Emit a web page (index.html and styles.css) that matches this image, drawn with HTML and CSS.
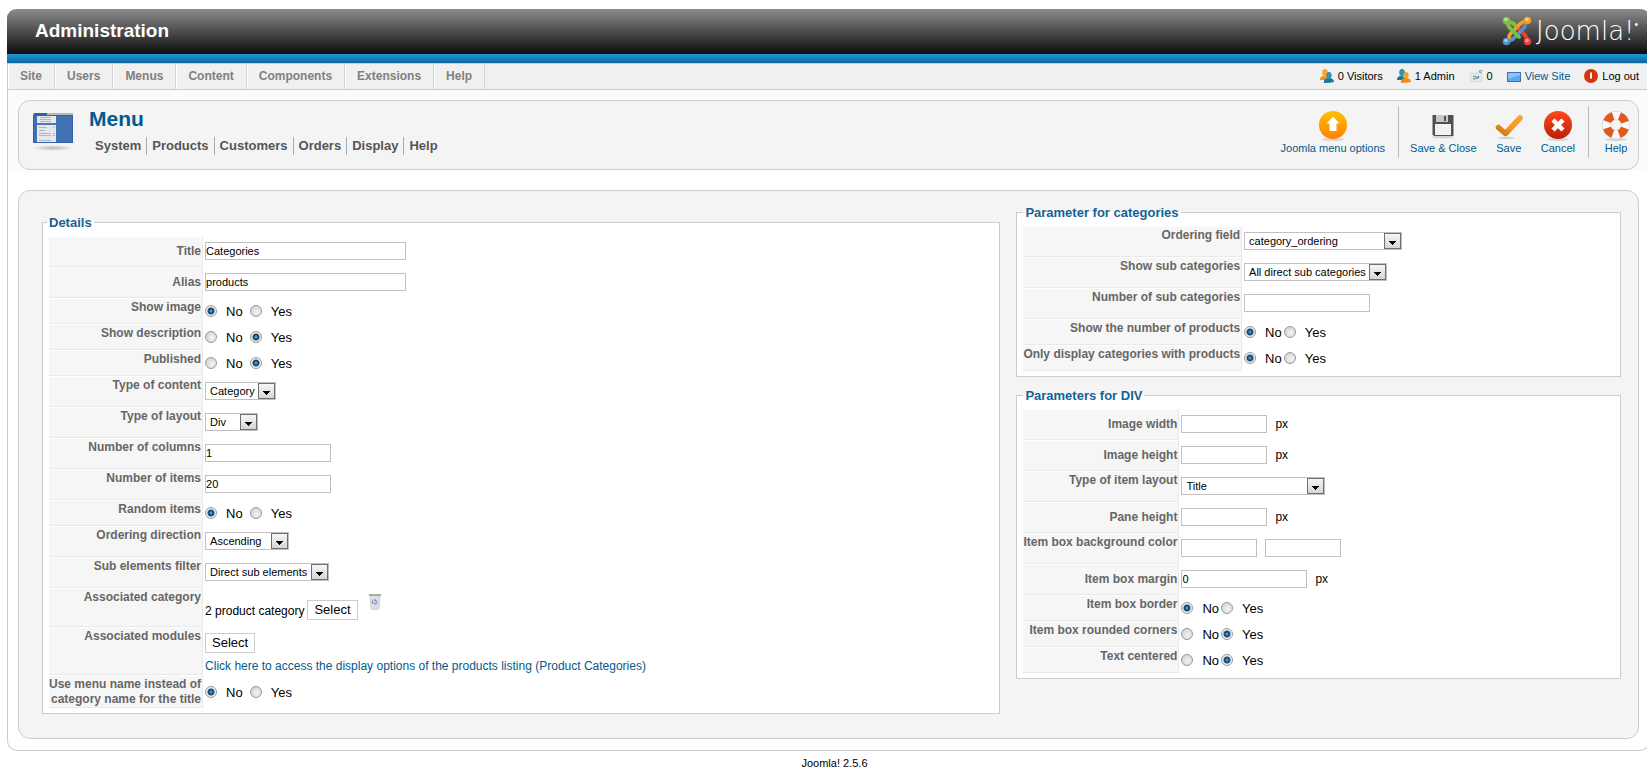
FILE: index.html
```
<!DOCTYPE html>
<html lang="en">
  <head>
    <meta charset="UTF-8" />
    <meta name="viewport" content="width=device-width, initial-scale=1.0" />
    <title>Administration - Menu</title>
    <link rel="stylesheet" href="styles.css">
  </head>
  <body>
    <header class="header">
      <h1>Administration</h1>
      <div class="logo">
        <svg width="30" height="30" viewBox="0 0 30 30" fill="none" stroke-width="3.8" stroke-linecap="round" stroke-linejoin="round">
          <path d="M4.500 25.500L8 24.500Q11 23.500 13 21L21 13" stroke="#5091cd" />
          <path d="M25.500 25.500L24.500 22Q23.500 19 21 17L13 9Q11 7 8 8" stroke="#ee4035" />
          <path d="M25.500 4.500L22 5.500Q19 6.500 17 9L9 17Q7 19 7 22" stroke="#f89a1c" />
          <path d="M4.500 4.500L5.500 8Q6.500 11 9 13L17 21" stroke="#7ac143" />
          <path d="M17 17L21 13Q23 11 23 9" stroke="#5091cd" />
          <path d="M6 7Q10 5 13 9" stroke="#7ac143" />
          <circle cx="4.500" cy="4.500" r="3.800" fill="#7ac143" />
          <circle cx="25.500" cy="4.500" r="3.800" fill="#f89a1c" />
          <circle cx="4.500" cy="25.500" r="3.800" fill="#5091cd" />
          <circle cx="25.500" cy="25.500" r="3.800" fill="#ee4035" />
          <g fill="#fff" fill-opacity="0.5">
            <circle cx="4" cy="3.500" r="1.800" />
            <circle cx="25" cy="3.500" r="1.800" />
            <circle cx="4" cy="24.500" r="1.800" />
            <circle cx="25" cy="24.500" r="1.800" />
          </g>
        </svg>
        <span>Joomla!<sup>&bull;</sup></span>
      </div>
    </header>

    <div class="menubar">
      <nav class="menu">
        <a href="#">Site</a>
        <a href="#">Users</a>
        <a href="#">Menus</a>
        <a href="#">Content</a>
        <a href="#">Components</a>
        <a href="#">Extensions</a>
        <a href="#">Help</a>
      </nav>
      <div class="status">
        <span>
          <svg width="14" height="14" viewBox="0 0 14 14">
            <path d="M0 11Q0 7 4 7Q8 7 9 11Z" fill="#e8951c" />
            <ellipse cx="5" cy="3.500" rx="2.800" ry="3.500" fill="#f5a623" />
            <path d="M4 14Q3 10 8 9Q14 9 14 13Q10 14 4 14Z" fill="#1b7694" />
            <ellipse cx="9" cy="6.500" rx="2.600" ry="3.400" fill="#2c93b4" />
          </svg>
          0 Visitors
        </span>
        <span>
          <svg width="14" height="14" viewBox="0 0 14 14">
            <path d="M0 11Q0 7 4 7Q8 7 9 11Z" fill="#1b7694" />
            <ellipse cx="5" cy="3.500" rx="2.800" ry="3.500" fill="#2c93b4" />
            <path d="M4 14Q3 10 8 9Q14 9 14 13Q10 14 4 14Z" fill="#f08a1c" />
            <ellipse cx="9" cy="6.500" rx="2.600" ry="3.400" fill="#f5a623" />
          </svg>
          1 Admin
        </span>
        <span>
          <svg width="14" height="14" viewBox="0 0 14 14">
            <path d="M1 5L12 3L13 12L2 13Z" fill="#e9e9e9" stroke="#dadada" />
            <path d="M4 8Q6 6 7 8Q9 11 10 8M4 10Q6 11 10 7" fill="none" stroke="#3d8196" />
            <path d="M9 0L14 0L13 5L9 4Z" fill="#e9eef4" />
            <circle cx="11.500" cy="2.500" r="1.200" fill="none" stroke="#5a8fc8" />
          </svg>
          0
        </span>
        <a href="#">
          <svg width="14" height="14" viewBox="0 0 14 14">
            <rect x="0.500" y="3.500" width="13" height="9" fill="#5ba6f5" stroke="#3f6fae" />
            <path d="M1 4H13V6L1 10Z" fill="#8cc2fa" />
          </svg>
          View Site
        </a>
        <a href="#" class="logout">
          <svg width="14" height="14" viewBox="0 0 14 14">
            <circle cx="7" cy="7" r="7" fill="#d9340f" />
            <path d="M7 3.500V9.500" stroke="#fff" stroke-width="2" />
          </svg>
          Log out
        </a>
      </div>
    </div>

    <main class="content">
      <div class="toolbar-wrap">
        <section class="toolbar">
          <svg class="page-icon" width="40" height="38" viewBox="0 0 40 38">
            <defs>
              <radialGradient id="shadow">
                <stop offset="0" stop-color="#b8b8b8" />
                <stop offset="1" stop-color="#f4f4f4" />
              </radialGradient>
            </defs>
            <ellipse cx="20" cy="35" rx="20" ry="3" fill="url(#shadow)" />
            <rect width="40" height="30" fill="#2f61a6" />
            <rect x="1" y="3" width="38" height="26" fill="#3f71b3" />
            <path d="M0 0H40V2H0Z" fill="#b5bcb5" />
            <path d="M1 0H14V2H1Z" fill="#2f61a6" />
            <path d="M4 3H23V29H4Z" fill="#e6e8ec" />
            <path d="M4 10H23V12H4Z" fill="#4d78b5" />
            <path d="M7 4.500H18M7 6.500H18M7 8.500H18M6 14.500H14M6 17.500H12M6 20.500H18M6 22.500H18M6 27.500H18M20 14.500H22M20 20.500H22M20 22.500H22" stroke="#b4b6bd" />
          </svg>
          <div class="page-title">
            <h2>Menu</h2>
            <nav class="submenu">
              <a href="#">System</a>
              <a href="#">Products</a>
              <a href="#">Customers</a>
              <a href="#">Orders</a>
              <a href="#">Display</a>
              <a href="#">Help</a>
            </nav>
          </div>
          <div class="buttons">
            <button type="button" class="tool">
              <svg width="32" height="32" viewBox="0 0 32 32">
                <defs>
                  <linearGradient id="orange" x1="0" y1="0" x2="0" y2="1">
                    <stop offset="0" stop-color="#ffc000" />
                    <stop offset="1" stop-color="#ff8200" />
                  </linearGradient>
                  <linearGradient id="red" x1="0" y1="0" x2="0" y2="1">
                    <stop offset="0" stop-color="#ff4a1c" />
                    <stop offset="1" stop-color="#b81f0a" />
                  </linearGradient>
                  <linearGradient id="tick" x1="0" y1="1" x2="1" y2="0">
                    <stop offset="0" stop-color="#c9730f" />
                    <stop offset="0.500" stop-color="#f79a23" />
                    <stop offset="1" stop-color="#f7a13a" />
                  </linearGradient>
                </defs>
                <ellipse cx="16" cy="29.500" rx="11" ry="1.500" fill="#d4d4d4" />
                <circle cx="16" cy="15" r="14" fill="url(#orange)" />
                <path d="M16 6.500L22.500 13.500H19.500V21H12.500V13.500H9.500Z" fill="#fff" />
              </svg>
              Joomla menu options
            </button>
            <span class="divider"></span>
            <button type="button" class="tool">
              <svg width="32" height="32" viewBox="0 0 32 32">
                <ellipse cx="16" cy="27" rx="11" ry="1.500" fill="#d4d4d4" />
                <path d="M5.500 5H26.500V26H7L5.500 24.500Z" fill="#505050" />
                <rect x="9" y="5" width="12" height="7" fill="#c8c8c8" />
                <rect x="17" y="6" width="2" height="5" fill="#505050" />
                <rect x="8" y="14" width="16" height="11" fill="#f2f2f2" />
              </svg>
              Save &amp; Close
            </button>
            <button type="button" class="tool">
              <svg width="32" height="32" viewBox="0 0 32 32">
                <ellipse cx="13" cy="28" rx="8" ry="1" fill="#cfcfcf" />
                <path d="M5.500 17.500L12.500 23.500L27 8" fill="none" stroke="url(#tick)" stroke-width="5.500" stroke-linecap="round" stroke-linejoin="round" />
              </svg>
              Save
            </button>
            <button type="button" class="tool">
              <svg width="32" height="32" viewBox="0 0 32 32">
                <ellipse cx="16" cy="29.500" rx="11" ry="1.500" fill="#d4d4d4" />
                <circle cx="16" cy="15" r="14" fill="url(#red)" />
                <path d="M11 10L21 20M21 10L11 20" stroke="#fff" stroke-width="4.500" />
              </svg>
              Cancel
            </button>
            <span class="divider"></span>
            <button type="button" class="tool">
              <svg width="32" height="32" viewBox="0 0 32 32" fill="none">
                <ellipse cx="16" cy="29.500" rx="11" ry="1.500" fill="#d4d4d4" />
                <circle cx="16" cy="15" r="9.500" stroke="#cfcfcf" stroke-width="9" />
                <circle cx="16" cy="15" r="9.500" stroke="#fafafa" stroke-width="8" />
                <circle cx="16" cy="15" r="9.500" stroke="#e0581c" stroke-width="8" stroke-dasharray="8.500 6.423" stroke-dashoffset="-3.212" />
              </svg>
              Help
            </button>
          </div>
        </section>
      </div>

      <form class="panel">
        <fieldset class="details">
          <legend>Details</legend>
          <table>
            <tr>
              <th class="mid"><label for="title">Title</label></th>
              <td><input type="text" id="title" class="wide" value="Categories" /></td>
            </tr>
            <tr>
              <th class="mid"><label for="alias">Alias</label></th>
              <td><input type="text" id="alias" class="wide" value="products" /></td>
            </tr>
            <tr class="choice">
              <th>Show image</th>
              <td>
                <div class="radios">
                  <input type="radio" name="image" id="image0" checked /><label for="image0">No</label>
                  <input type="radio" name="image" id="image1" /><label for="image1">Yes</label>
                </div>
              </td>
            </tr>
            <tr class="choice">
              <th>Show description</th>
              <td>
                <div class="radios">
                  <input type="radio" name="desc" id="desc0" /><label for="desc0">No</label>
                  <input type="radio" name="desc" id="desc1" checked /><label for="desc1">Yes</label>
                </div>
              </td>
            </tr>
            <tr class="choice">
              <th>Published</th>
              <td>
                <div class="radios">
                  <input type="radio" name="published" id="published0" /><label for="published0">No</label>
                  <input type="radio" name="published" id="published1" checked /><label for="published1">Yes</label>
                </div>
              </td>
            </tr>
            <tr>
              <th><label for="content-type">Type of content</label></th>
              <td><select id="content-type"><option>Category</option></select></td>
            </tr>
            <tr>
              <th><label for="layout-type">Type of layout</label></th>
              <td><select id="layout-type" class="select-small"><option>Div</option></select></td>
            </tr>
            <tr>
              <th><label for="columns">Number of columns</label></th>
              <td><input type="text" id="columns" value="1" /></td>
            </tr>
            <tr>
              <th><label for="items">Number of items</label></th>
              <td><input type="text" id="items" value="20" /></td>
            </tr>
            <tr class="choice">
              <th>Random items</th>
              <td>
                <div class="radios">
                  <input type="radio" name="random" id="random0" checked /><label for="random0">No</label>
                  <input type="radio" name="random" id="random1" /><label for="random1">Yes</label>
                </div>
              </td>
            </tr>
            <tr>
              <th><label for="direction">Ordering direction</label></th>
              <td><select id="direction" class="select-medium"><option>Ascending</option></select></td>
            </tr>
            <tr>
              <th><label for="filter">Sub elements filter</label></th>
              <td><select id="filter"><option>Direct sub elements</option></select></td>
            </tr>
            <tr class="category">
              <th>Associated category</th>
              <td>
                <div class="picker">
                  <span>2 product category</span>
                  <button type="button" class="btn">Select</button>
                  <button type="button" class="trash" aria-label="Delete">
                    <svg width="12" height="16" viewBox="0 0 12 16">
                      <path d="M1 1H11L10 15Q6 16 2 15Z" fill="#dedede" stroke="#d0d0d0" />
                      <path d="M0 0H12V2H0Z" fill="#a9a9a4" />
                      <circle cx="5.500" cy="8" r="2" fill="none" stroke="#7b93d4" stroke-width="1.500" stroke-dasharray="3 1" />
                    </svg>
                  </button>
                </div>
              </td>
            </tr>
            <tr class="modules">
              <th>Associated modules</th>
              <td>
                <button type="button" class="btn">Select</button>
                <a href="#" class="options-link">Click here to access the display options of the products listing (Product Categories)</a>
              </td>
            </tr>
            <tr class="choice tall">
              <th>Use menu name instead of<br />category name for the title</th>
              <td>
                <div class="radios">
                  <input type="radio" name="usename" id="usename0" checked /><label for="usename0">No</label>
                  <input type="radio" name="usename" id="usename1" /><label for="usename1">Yes</label>
                </div>
              </td>
            </tr>
          </table>
        </fieldset>

        <div class="params">
          <fieldset>
            <legend>Parameter for categories</legend>
            <table class="table-categories">
              <tr>
                <th><label for="ordering">Ordering field</label></th>
                <td><select id="ordering" class="select-large"><option>category_ordering</option></select></td>
              </tr>
              <tr>
                <th><label for="sub">Show sub categories</label></th>
                <td><select id="sub"><option>All direct sub categories</option></select></td>
              </tr>
              <tr>
                <th><label for="subnumber">Number of sub categories</label></th>
                <td><input type="text" id="subnumber" /></td>
              </tr>
              <tr class="choice">
                <th>Show the number of products</th>
                <td>
                  <div class="radios tight">
                    <input type="radio" name="number" id="number0" checked /><label for="number0">No</label>
                    <input type="radio" name="number" id="number1" /><label for="number1">Yes</label>
                  </div>
                </td>
              </tr>
              <tr class="choice">
                <th>Only display categories with products</th>
                <td>
                  <div class="radios tight">
                    <input type="radio" name="only" id="only0" checked /><label for="only0">No</label>
                    <input type="radio" name="only" id="only1" /><label for="only1">Yes</label>
                  </div>
                </td>
              </tr>
            </table>
          </fieldset>

          <fieldset>
            <legend>Parameters for DIV</legend>
            <table>
              <tr>
                <th class="mid"><label for="img-width">Image width</label></th>
                <td><input type="text" id="img-width" class="short" /><span class="unit">px</span></td>
              </tr>
              <tr>
                <th class="mid"><label for="img-height">Image height</label></th>
                <td><input type="text" id="img-height" class="short" /><span class="unit">px</span></td>
              </tr>
              <tr>
                <th><label for="item-layout">Type of item layout</label></th>
                <td><select id="item-layout" class="select-title"><option>Title</option></select></td>
              </tr>
              <tr>
                <th class="mid"><label for="pane">Pane height</label></th>
                <td><input type="text" id="pane" class="short" /><span class="unit">px</span></td>
              </tr>
              <tr>
                <th><label for="color">Item box background color</label></th>
                <td><input type="text" id="color" class="color" /><input type="text" class="color" aria-label="Color preview" /></td>
              </tr>
              <tr>
                <th class="mid"><label for="margin">Item box margin</label></th>
                <td><input type="text" id="margin" value="0" /><span class="unit">px</span></td>
              </tr>
              <tr class="choice">
                <th>Item box border</th>
                <td>
                  <div class="radios tight">
                    <input type="radio" name="border" id="border0" checked /><label for="border0">No</label>
                    <input type="radio" name="border" id="border1" /><label for="border1">Yes</label>
                  </div>
                </td>
              </tr>
              <tr class="choice">
                <th>Item box rounded corners</th>
                <td>
                  <div class="radios tight">
                    <input type="radio" name="corners" id="corners0" /><label for="corners0">No</label>
                    <input type="radio" name="corners" id="corners1" checked /><label for="corners1">Yes</label>
                  </div>
                </td>
              </tr>
              <tr class="choice">
                <th>Text centered</th>
                <td>
                  <div class="radios tight">
                    <input type="radio" name="centered" id="centered0" /><label for="centered0">No</label>
                    <input type="radio" name="centered" id="centered1" checked /><label for="centered1">Yes</label>
                  </div>
                </td>
              </tr>
            </table>
          </fieldset>
        </div>
      </form>
    </main>

    <footer>Joomla! 2.5.6</footer>
  </body>
</html>
```
FILE: styles.css
```
* {
  box-sizing: border-box;
}

html {
  overflow-x: hidden;
}

body {
  margin: 9px -3px 0 7px;
  background: #fff;
  color: #000;
  font-family: "Liberation Sans", Arial, sans-serif;
  font-size: 12px;
}

a {
  color: #025a8d;
  text-decoration: none;
}

button,
input,
select {
  font-family: inherit;
}

h1,
h2 {
  margin: 0;
}

.header {
  display: flex;
  justify-content: space-between;
  align-items: center;
  height: 54px;
  padding: 0 12px 11px 28px;
  border-radius: 9px 9px 0 0;
  /* dark bar with the blue strip under it */
  background: linear-gradient(#8c8c8c, #0d0d0d 45px, #2494d2 45px, #0b66a0);
  color: #fff;
}

.header h1 {
  font-size: 19px;
  line-height: 24px;
}

.logo {
  display: flex;
  align-items: center;
  gap: 4px;
}

.logo span {
  font-family: "DejaVu Sans", sans-serif;
  font-size: 26px;
  font-weight: 200;
  line-height: 30px;
}

.logo sup {
  font-size: 10px;
  line-height: 10px;
  vertical-align: 12px;
}

.menubar {
  display: flex;
  justify-content: space-between;
  height: 27px;
  border: 1px solid #ccc;
  background: #f0f0f0;
}

.menu {
  display: flex;
}

.menu a {
  padding: 0 12px 0 11px;
  border-left: 1px solid #fff;
  border-right: 1px solid #d4d4d4;
  color: #808080;
  font-size: 12px;
  font-weight: bold;
  line-height: 25px;
}

.status {
  display: flex;
  gap: 14px;
  padding-right: 10px;
  font-size: 11px;
  line-height: 25px;
}

.status span,
.status a {
  display: flex;
  align-items: center;
  gap: 4px;
}

.status svg {
  margin-top: -2px;
}

.status .logout {
  color: #000;
}

.content {
  padding-bottom: 11px;
  border: 1px solid #ccc;
  border-top: none;
  border-radius: 0 0 10px 10px;
}

.toolbar-wrap {
  padding: 10px 10px 0;
  background: #fbfbfb;
}

.toolbar {
  display: flex;
  height: 70px;
  padding: 5px 6px 0 14px;
  border: 1px solid #ccc;
  border-radius: 12px;
  background: #f4f4f4;
}

.page-icon {
  margin-top: 7px;
}

.page-title {
  padding: 0 0 0 16px;
}

.page-title h2 {
  color: #025a8d;
  font-size: 21px;
  line-height: 26px;
}

.submenu {
  display: flex;
  padding: 5px 0 0 6px;
}

.submenu a {
  padding-right: 5px;
  margin-right: 5px;
  border-right: 1px solid #aaa;
  color: #555;
  font-size: 13px;
  font-weight: bold;
  line-height: 18px;
}

.submenu a:last-child {
  border: none;
}

.buttons {
  display: flex;
  margin-left: auto;
}

.tool {
  display: flex;
  flex-direction: column;
  align-items: center;
  margin: 0;
  padding: 4px 8px 0;
  border: none;
  background: none;
  color: #025a8d;
  font-size: 11px;
  line-height: 13px;
}

.divider {
  width: 1px;
  height: 52px;
  margin: 0 5px;
  background: #bbb;
}

.divider + .tool {
  padding-left: 6px;
}

.tool:last-child {
  padding-right: 0;
}

.panel {
  display: grid;
  grid-template-columns: 959fr 605fr;
  align-items: start;
  gap: 16px;
  min-height: 549px;
  margin: 20px 10px 0;
  padding: 14px 17px 0 23px;
  border: 1px solid #ccc;
  border-radius: 12px;
  background: #f4f4f4;
}

fieldset {
  min-width: 0;
  margin: 0;
  padding: 6px 6px 5px;
  border: 1px solid #ccc;
  background: #fff;
}

.details {
  margin-top: 10px;
}

.params fieldset + fieldset {
  margin-top: 11px;
}

legend {
  padding: 0 2px;
  color: #146295;
  font-size: 13px;
  font-weight: bold;
  line-height: 15px;
}

.details legend {
  margin-left: -2px;
}

table {
  border-spacing: 0;
}

tr {
  height: 31px;
}

th {
  min-width: 154px;
  padding: 2px 1px 0 0;
  border-right: 1px solid #e9e9e9;
  border-bottom: 1px solid #e9e9e9;
  box-shadow: inset 0 1px #fff;
  background: #f6f6f6;
  color: #666;
  font-size: 12px;
  line-height: 15px;
  text-align: right;
  vertical-align: top;
  white-space: nowrap;
}

.table-categories th {
  min-width: 216px;
}

th.mid {
  padding-top: 0;
  vertical-align: middle;
}

td {
  padding: 6px 0 0 2px;
  vertical-align: top;
}

.choice {
  height: 26px;
}

.choice td {
  padding-top: 4px;
}

.choice.tall {
  height: 33px;
}

.choice.tall td {
  padding-top: 8px;
}

input[type="text"] {
  width: 126px;
  height: 18px;
  margin: 0;
  padding: 0;
  border: 1px solid #c0c0c0;
  background: #fff;
  color: #000;
  font-size: 11px;
  vertical-align: top;
}

input[type="text"].wide {
  width: 201px;
}

input[type="text"].short {
  width: 86px;
}

input[type="text"].color {
  width: 76px;
  margin-right: 8px;
}

.unit {
  padding-left: 8px;
  line-height: 18px;
}

select {
  display: block;
  height: 18px;
  padding: 0 20px 0 4px;
  border: 1px solid #c0c0c0;
  border-radius: 0;
  appearance: none;
  /* arrow, its button face, then the dark frame around it */
  background:
    conic-gradient(from 315deg at 50% 100%, #000 90deg, transparent 0) right 5px top 8px / 7px 4px no-repeat,
    linear-gradient(#f6f6f6, #d6d6d6) right 1px top 1px / 15px 14px no-repeat,
    linear-gradient(#707070, #707070) right 0 top 0 / 17px 16px no-repeat,
    #fff;
  color: #000;
  font-size: 11px;
}

.select-small {
  width: 53px;
}

.select-medium {
  width: 84px;
}

.select-title {
  width: 144px;
}

.select-large {
  width: 158px;
}

.radios {
  display: flex;
  align-items: center;
  font-size: 13px;
  line-height: 16px;
}

.radios label {
  margin: 2px 7px 0 9px;
}

.radios.tight label {
  margin-right: 2px;
}

input[type="radio"] {
  width: 12px;
  height: 12px;
  margin: 0;
  border: 1px solid #999;
  border-radius: 50%;
  appearance: none;
  background: radial-gradient(circle at 60% 60%, #f5f5f5, #c9c9c9);
}

input[type="radio"]:checked {
  background: radial-gradient(circle, #6cc0e8 0, #174f7c 2px, #174f7c 3px, #eee 4px);
}

.category {
  height: 39px;
}

.picker {
  display: flex;
  align-items: flex-start;
  gap: 3px;
}

.picker span {
  padding-top: 10px;
  line-height: 14px;
}

.picker .btn {
  margin-top: 6px;
}

.btn {
  display: block;
  height: 20px;
  padding: 0 6px;
  border: 1px solid #ccc;
  background: #fff;
  color: #000;
  font-size: 13px;
  line-height: 18px;
}

.trash {
  margin-left: 8px;
  padding: 0;
  border: none;
  background: none;
  line-height: 0;
}

.modules {
  height: 48px;
}

.options-link {
  display: block;
  padding-top: 5px;
  line-height: 16px;
}

footer {
  padding: 5px 0 0 12px;
  font-size: 11px;
  line-height: 14px;
  text-align: center;
}
```
